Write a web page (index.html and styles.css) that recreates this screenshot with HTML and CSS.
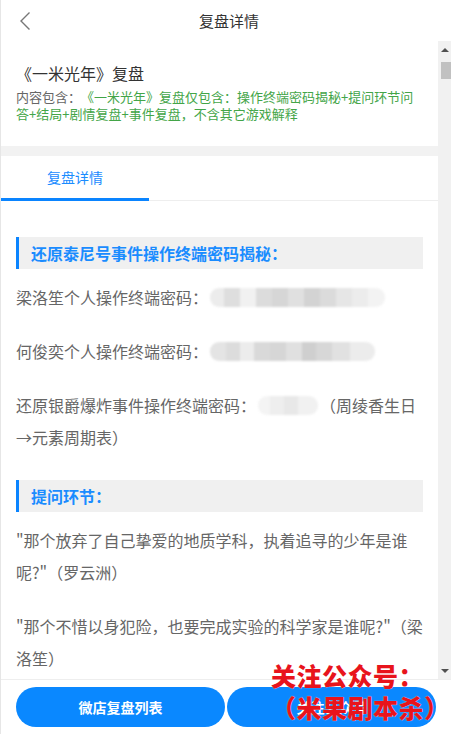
FILE: index.html
```html
<!DOCTYPE html>
<html lang="zh-CN">
<head>
    <meta charset="UTF-8">
    <meta name="viewport" content="width=device-width, initial-scale=1.0">
    <title>复盘详情</title>
    <link rel="stylesheet" href="styles.css">
</head>
<body>

<div class="page">
    <div class="topbar">
        <div class="back">
            <svg width="12" height="20" viewBox="0 0 12 20"><path d="M10.5 1.5 L2 10 L10.5 18.5" fill="none" stroke="#777" stroke-width="1.4"/></svg>
        </div>
        <div class="topbar-title">复盘详情</div>
        <div></div>
    </div>

    <div class="middle">
        <div class="scroll">
            <div class="intro">
                <div class="intro-title">《一米光年》复盘</div>
                <div class="intro-desc"><span class="label">内容包含：</span><span class="green">《一米光年》复盘仅包含：操作终端密码揭秘+提问环节问答+结局+剧情复盘+事件复盘，不含其它游戏解释</span></div>
            </div>

            <div class="tabs">
                <div class="tab active">复盘详情</div>
            </div>

            <div class="article">
                <div class="section-title">还原泰尼号事件操作终端密码揭秘：</div>
                <p>梁洛笙个人操作终端密码：<span class="blur blur-a"></span></p>
                <p>何俊奕个人操作终端密码：<span class="blur blur-b"></span></p>
                <p>还原银爵爆炸事件操作终端密码：<span class="blur blur-c"></span>（周绫香生日→元素周期表）</p>

                <div class="section-title">提问环节：</div>
                <p>"那个放弃了自己挚爱的地质学科，执着追寻的少年是谁呢?"（罗云洲）</p>
                <p>"那个不惜以身犯险，也要完成实验的科学家是谁呢?"（梁洛笙）</p>
            </div>
        </div>

        <!-- fake scrollbar, the article is very long -->
        <div class="scrollbar">
            <div class="arrow up"></div>
            <div class="thumb"></div>
            <div class="track"></div>
            <div class="arrow down"></div>
        </div>
    </div>

    <div class="footer">
        <button class="btn">微店复盘列表</button>
        <button class="btn">关注公众号</button>
    </div>

    <div class="watermark">关注公众号：<br>（米果剧本杀）</div>
</div>

</body>
</html>
```

FILE: styles.css
```css
body {
    margin: 0;
    font-family: "Noto Sans CJK SC", "Liberation Sans", sans-serif;
    text-spacing-trim: space-all;
    background-color: #fff;
    color: #333;
}
.page {
    position: relative;
    width: 451px;
    height: 734px;
    box-sizing: border-box;
    border-left: 1px solid #e6e6e6;
    display: flex;
    flex-direction: column;
    overflow: hidden;
}

/* top bar */
.topbar {
    height: 41px;
    flex-shrink: 0;
    display: grid;
    grid-template-columns: 40px 1fr 40px;
    align-items: center;
}
.back {
    display: flex;
    padding-left: 18px;
}
.topbar-title {
    text-align: center;
    font-size: 15px;
    color: #333;
    padding-left: 6px;
}

/* middle */
.middle {
    flex: 1;
    display: flex;
    min-height: 0;
}
.scroll {
    flex: 1;
    overflow: hidden;
}
.scrollbar {
    width: 13px;
    background-color: #f1f1f1;
    display: flex;
    flex-direction: column;
    align-items: center;
}
.arrow {
    height: 17px;
    width: 13px;
    display: flex;
    align-items: center;
    justify-content: center;
}
.arrow::after {
    content: "";
    border-left: 4px solid transparent;
    border-right: 4px solid transparent;
}
.arrow.up::after {
    border-bottom: 4px solid #505050;
}
.arrow.down::after {
    border-top: 4px solid #505050;
}
.thumb {
    width: 10px;
    height: 17px;
    margin-top: 4px;
    margin-left: 2px;
    background-color: #c1c1c1;
}
.track {
    flex: 1;
}

/* intro */
.intro {
    padding: 20px 15px 24px 15px;
    border-bottom: 10px solid #f2f2f2;
}
.intro-title {
    font-size: 16px;
    line-height: 24px;
    color: #333;
}
.intro-desc {
    margin-top: 3px;
    font-size: 13px;
    line-height: 17px;
}
.label {
    color: #666;
}
.green {
    color: #43a548;
}

/* tabs */
.tabs {
    display: flex;
    border-bottom: 1px solid #eee;
}
.tab {
    width: 148px;
    height: 42px;
    line-height: 42px;
    text-align: center;
    font-size: 14px;
    color: #666;
}
.tab.active {
    color: #1a8cff;
    border-bottom: 3px solid #0a84ff;
    margin-bottom: -1px;
}

/* article */
.article {
    padding: 36px 15px 0 15px;
}
.section-title {
    height: 32px;
    line-height: 32px;
    margin: 27px 0 12px 0;
    padding-left: 12px;
    background-color: #f0f0f0;
    border-left: 3px solid #0a84ff;
    color: #1a8cff;
    font-size: 16px;
    font-weight: bold;
}
.section-title:first-child {
    margin-top: 0;
}
.article p {
    margin: 0 0 22px 0;
    font-size: 16px;
    line-height: 32px;
    color: #666;
}

/* mosaic over the passwords */
.blur {
    display: inline-block;
    height: 19px;
    vertical-align: -3px;
    border-radius: 9px;
    filter: blur(1px);
}
.blur-a {
    width: 175px;
    margin-left: 2px;
    background: linear-gradient(90deg, #ececec 0 14px, #dedede 14px 30px, #f1f1f1 30px 46px, #dcdcdc 46px 62px, #d6d6d6 62px 78px, #e0e0e0 78px 94px, #d3d3d3 94px 110px, #dbdbdb 110px 126px, #e6e6e6 126px 142px, #ececec 142px 158px, #f3f3f3 158px 175px);
}
.blur-b {
    width: 165px;
    margin-left: 2px;
    background: linear-gradient(90deg, #e4e4e4 0 16px, #dcdcdc 16px 30px, #ececec 30px 44px, #d9d9d9 44px 60px, #d6d6d6 60px 76px, #e0e0e0 76px 92px, #cfcfcf 92px 106px, #d7d7d7 106px 122px, #e1e1e1 122px 140px, #ececec 140px 165px);
}
.blur-c {
    width: 60px;
    margin: 0 2px;
    background: linear-gradient(90deg, #f4f4f4 0 12px, #eeeeee 12px 26px, #e8e8e8 26px 40px, #f1f1f1 40px 60px);
}

/* footer */
.footer {
    flex-shrink: 0;
    display: flex;
    gap: 2px;
    padding: 7px 15px 7px 15px;
    border-top: 1px solid #eee;
}
.btn {
    flex: 1;
    height: 40px;
    border: none;
    border-radius: 20px;
    background-color: #0a88ff;
    color: #fff;
    font-family: inherit;
    font-size: 14px;
    font-weight: bold;
}

/* watermark stamped on the screenshot */
.watermark {
    position: absolute;
    left: 270px;
    top: 659px;
    white-space: nowrap;
    font-size: 25px;
    line-height: 32px;
    font-weight: 900;
    color: #e8141c;
    letter-spacing: 0.5px;
    text-shadow: 0 0 1px #fff;
}
```
